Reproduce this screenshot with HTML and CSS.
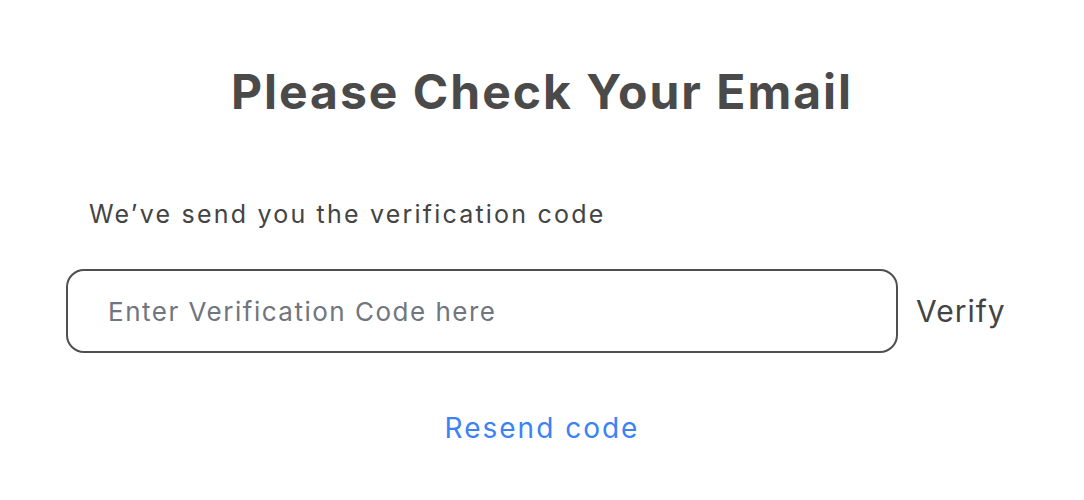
FILE: index.html
```html
<!DOCTYPE html>
<html>
  <head>
    <meta charset="utf-8" />
    <title>Verify email</title>
    <link rel="stylesheet" href="styles.css">
  </head>
  <body>
    <main class="verify">
      <h1 class="verify-title">Please Check Your Email</h1>
      <p class="verify-note">We’ve send you the verification code</p>
      <form class="verify-row">
        <input class="verify-input" type="text" placeholder="Enter Verification Code here">
        <span class="verify-btn">Verify</span>
      </form>
      <p class="resend"><a href="#">Resend code</a></p>
    </main>
  </body>
</html>
```

FILE: styles.css
```css
html { font-family: Inter, "Noto Sans", sans-serif; }

body {
  margin: 0;
  background: #fff;
  color: #4a4a4a;
}

.verify {
  padding-top: 60px;
}

.verify-title {
  margin: 0;
  text-align: center;
  font-size: 48px;
  font-weight: 700;
  line-height: 64px;
  letter-spacing: 2px;
  color: #4a4a4a;
}

.verify-note {
  margin: 74px 0 0 89px;
  font-size: 25px;
  line-height: 32px;
  letter-spacing: 2.2px;
  color: #444;
}

.verify-row {
  display: flex;
  align-items: center;
  gap: 18px;
  margin: 39px 0 0 66px;
}

.verify-input {
  box-sizing: border-box;
  width: 832px;
  height: 84px;
  padding: 0 40px;
  border: 2px solid #4f4f4f;
  border-radius: 18px;
  font: inherit;
  font-size: 26px;
  letter-spacing: 1.5px;
  color: #333;
  outline: none;
}
.verify-input::placeholder {
  color: #707580;
}

.verify-btn {
  font-size: 30px;
  letter-spacing: 1px;
  color: #444;
}

.resend {
  margin: 58px 0 0;
  text-align: center;
  font-size: 28px;
  letter-spacing: 2px;
}
.resend a {
  color: #3b82f6;
  text-decoration: none;
}
```
